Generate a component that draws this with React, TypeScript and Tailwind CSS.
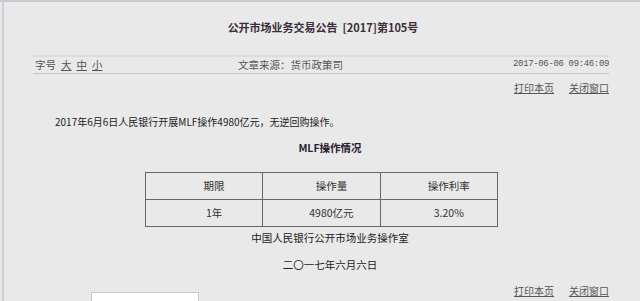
import React from 'react';

const rows = [
  ['期限', '操作量', '操作利率'],
  ['1年', '4980亿元', '3.20%'],
];

const App = () => {
  return (
    <div
      className="w-[640px] h-[301px] overflow-hidden bg-[#e9e9e9] border-t-2 border-[#c4cbd3] pl-[2px] text-[#333]"
      style={{ fontFamily: '"Noto Sans CJK SC", "Liberation Sans", sans-serif' }}
    >
      <div className="h-full border-l-2 border-[#ccd0d5] pl-[29px]">
        <div className="w-[576px]">
          <h1 className="pt-[17px] text-center text-[11px] leading-[16px] font-bold text-[#3a2f3a] pl-[4px]">
            公开市场业务交易公告&nbsp;&nbsp;[2017]第105号
          </h1>

          <div className="mt-[20px] border-t-2 border-[#dcdcdc] border-b border-b-[#c6c6c6] h-[19px] flex items-center text-[10.5px] text-[#555]">
            <div className="w-[170px] flex gap-[5px] pl-[2px]">
              <span>字号</span>
              <span className="underline">大</span>
              <span className="underline">中</span>
              <span className="underline">小</span>
            </div>
            <div className="flex-1 pl-[35px]">文章来源：货币政策司</div>
            <div
              className="text-[9px] tracking-[-0.35px] text-[#555]"
              style={{ fontFamily: '"Liberation Mono", monospace' }}
            >
              2017-06-06 09:46:09
            </div>
          </div>

          <div className="flex justify-end gap-[15px] mt-[7px] text-[10px] leading-[14px] text-[#555]">
            <span className="underline">打印本页</span>
            <span className="underline">关闭窗口</span>
          </div>

          <p className="mt-[20px] pl-[22px] text-[10px] leading-[14px] text-[#222]">
            2017年6月6日人民银行开展MLF操作4980亿元，无逆回购操作。
          </p>

          <p className="mt-[12px] text-center pl-[18px] text-[10.5px] leading-[14px] font-bold text-[#2a2030]">
            MLF操作情况
          </p>

          <table className="mt-[17px] ml-[112px] w-[353px] border-collapse border border-[#555] text-[10.5px] text-[#333]">
            <tbody>
              {rows.map((r, i) => (
                <tr key={i} className="h-[27px]">
                  {r.map((c, j) => (
                    <td
                      key={j}
                      className="border border-[#666] text-center pl-[20px] w-[118px]"
                    >
                      {c}
                    </td>
                  ))}
                </tr>
              ))}
            </tbody>
          </table>

          <p className="mt-[4px] text-center pl-[18px] text-[10.5px] leading-[14px] text-[#222]">
            中国人民银行公开市场业务操作室
          </p>
          <p className="mt-[13px] text-center pl-[18px] text-[10.5px] leading-[14px] text-[#222]">
            二〇一七年六月六日
          </p>

          <div className="flex items-start justify-between mt-[12px]">
            <div className="ml-[58px] mt-[8px] w-[108px] h-[20px] bg-white border border-[#c9c9c9]" />
            <div className="flex gap-[15px] text-[10px] leading-[14px] text-[#555]">
              <span className="underline">打印本页</span>
              <span className="underline">关闭窗口</span>
            </div>
          </div>
        </div>
      </div>
    </div>
  );
};

export default App;
